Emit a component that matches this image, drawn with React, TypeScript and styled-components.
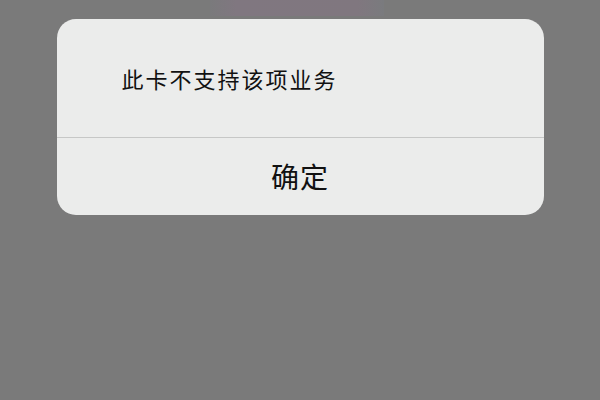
import styled, { createGlobalStyle } from 'styled-components'

const GlobalStyle = createGlobalStyle`
  html, body {
    margin: 0;
    padding: 0;
    background: #7a7a7a;
  }
  body {
    font-family: "Noto Sans CJK SC", "Noto Sans", sans-serif;
  }
`

export default function App() {
  return (
    <Screen>
      <GlobalStyle />
      <BehindStrip />
      <AlertDialog role="alertdialog">
        <Message>此卡不支持该项业务</Message>
        <ConfirmButton type="button">确定</ConfirmButton>
      </AlertDialog>
    </Screen>
  )
}

const Screen = styled.div`
  width: 600px;
  height: 400px;
  display: flex;
  flex-direction: column;
  align-items: center;
  background: #7a7a7a;
  overflow: hidden;
`

const BehindStrip = styled.div`
  width: 174px;
  height: 16px;
  margin-bottom: 3px;
  margin-right: 7px;
  background: linear-gradient(90deg, #7a7a7c 0%, #807780 15%, #80777f 85%, #7a7b7e 100%);
`

const AlertDialog = styled.div`
  width: 487px;
  height: 196px;
  display: flex;
  flex-direction: column;
  background: #ebeceb;
  border-radius: 19px;
  overflow: hidden;
`

const Message = styled.div`
  height: 118px;
  display: flex;
  align-items: center;
  padding-left: 65px;
  border-bottom: 1px solid #c6c7c6;
  font-size: 22px;
  letter-spacing: 2px;
  color: #111111;
`

const ConfirmButton = styled.button`
  flex: 1;
  display: flex;
  align-items: center;
  justify-content: center;
  border: none;
  background: transparent;
  font-family: inherit;
  font-size: 28px;
  letter-spacing: 1px;
  color: #111111;
  padding: 0 0 2px;
`
